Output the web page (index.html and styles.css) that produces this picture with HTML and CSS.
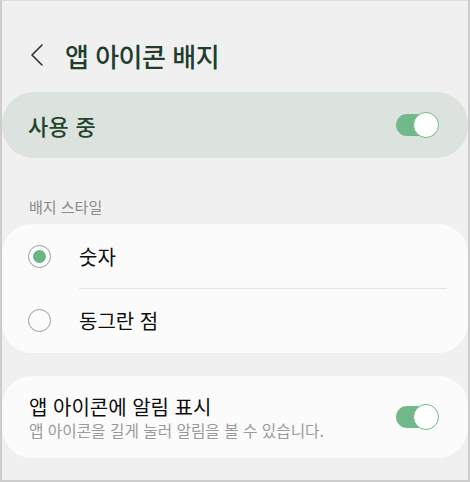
FILE: index.html
```html
<!DOCTYPE html>
<html lang="ko">
<head>
    <meta charset="UTF-8">
    <meta name="viewport" content="width=device-width, initial-scale=1.0">
    <title>앱 아이콘 배지</title>
    <link rel="stylesheet" href="styles.css">
</head>
<body>
    <div class="screen">
        <div class="header">
            <svg class="back" width="14" height="24" viewBox="0 0 14 24">
                <path d="M12 2 L2 12 L12 22" fill="none" stroke="#333" stroke-width="1.6" stroke-linecap="round" stroke-linejoin="round"/>
            </svg>
            <h1 class="title">앱 아이콘 배지</h1>
        </div>

        <div class="master">
            <span class="master-label">사용 중</span>
            <div class="switch on"><div class="knob"></div></div>
        </div>

        <div class="section-label">배지 스타일</div>

        <div class="card radios">
            <div class="radio-row">
                <span class="radio checked"></span>
                <span class="radio-text">숫자</span>
            </div>
            <div class="divider"></div>
            <div class="radio-row">
                <span class="radio"></span>
                <span class="radio-text">동그란 점</span>
            </div>
        </div>

        <div class="card setting">
            <div class="setting-text">
                <div class="setting-title">앱 아이콘에 알림 표시</div>
                <div class="setting-sub">앱 아이콘을 길게 눌러 알림을 볼 수 있습니다.</div>
            </div>
            <div class="switch on"><div class="knob"></div></div>
        </div>
    </div>
</body>
</html>
```

FILE: styles.css
```css
* {
    box-sizing: border-box;
}

body {
    margin: 0;
    font-family: "Noto Sans CJK KR", "Noto Sans", sans-serif;
}

.screen {
    width: 470px;
    height: 482px;
    background-color: #f0f0f0;
    border: 2px solid #cdcdcd;
    border-top: 1px solid #dcdcdc;
    overflow: hidden;
}

.header {
    display: flex;
    align-items: center;
    height: 90px;
    padding-left: 28px;
    padding-top: 18px;
}

.back {
    margin-right: 21px;
}

.title {
    margin: 0;
    font-size: 26px;
    font-weight: 500;
    color: #203d2e;
    letter-spacing: -0.5px;
}

.master {
    display: flex;
    align-items: center;
    justify-content: space-between;
    height: 66px;
    margin-top: 1px;
    padding: 0 30px 0 26px;
    background-color: #dce2dd;
    border-radius: 32px;
}

.master-label {
    font-size: 22px;
    font-weight: 500;
    color: #254332;
    letter-spacing: 0.3px;
}

.switch {
    position: relative;
    width: 42px;
    height: 22px;
    border-radius: 11px;
    background-color: #72b98a;
}

.switch .knob {
    position: absolute;
    right: -1px;
    top: -2px;
    width: 26px;
    height: 26px;
    border-radius: 50%;
    background-color: #fff;
    border: 1.5px solid #72b98a;
}

.section-label {
    padding: 38px 0 0 27px;
    height: 66px;
    font-size: 15px;
    color: #8a8a8a;
}

.card {
    background-color: #fbfbfb;
    border-radius: 30px;
}

.radios {
    padding: 1px 0;
}

.radio-row {
    display: flex;
    align-items: center;
    height: 63px;
    padding-left: 26px;
}

.radio {
    width: 23px;
    height: 23px;
    border-radius: 50%;
    border: 1.5px solid #9a9a9a;
    margin-right: 28px;
    display: flex;
    align-items: center;
    justify-content: center;
}

.radio.checked::after {
    content: "";
    width: 13px;
    height: 13px;
    border-radius: 50%;
    background-color: #6cb485;
}

.radio-text {
    font-size: 20px;
    color: #0d0d0d;
}

.divider {
    height: 1px;
    margin: 0 21px 0 77px;
    background-color: #e2e2e2;
}

.setting {
    display: flex;
    align-items: center;
    justify-content: space-between;
    margin-top: 23px;
    height: 82px;
    padding: 0 30px 0 27px;
}

.setting-title {
    font-size: 20px;
    color: #0d0d0d;
    line-height: 27px;
}

.setting-sub {
    font-size: 15.7px;
    color: #9a9a9a;
    line-height: 22px;
}
```
